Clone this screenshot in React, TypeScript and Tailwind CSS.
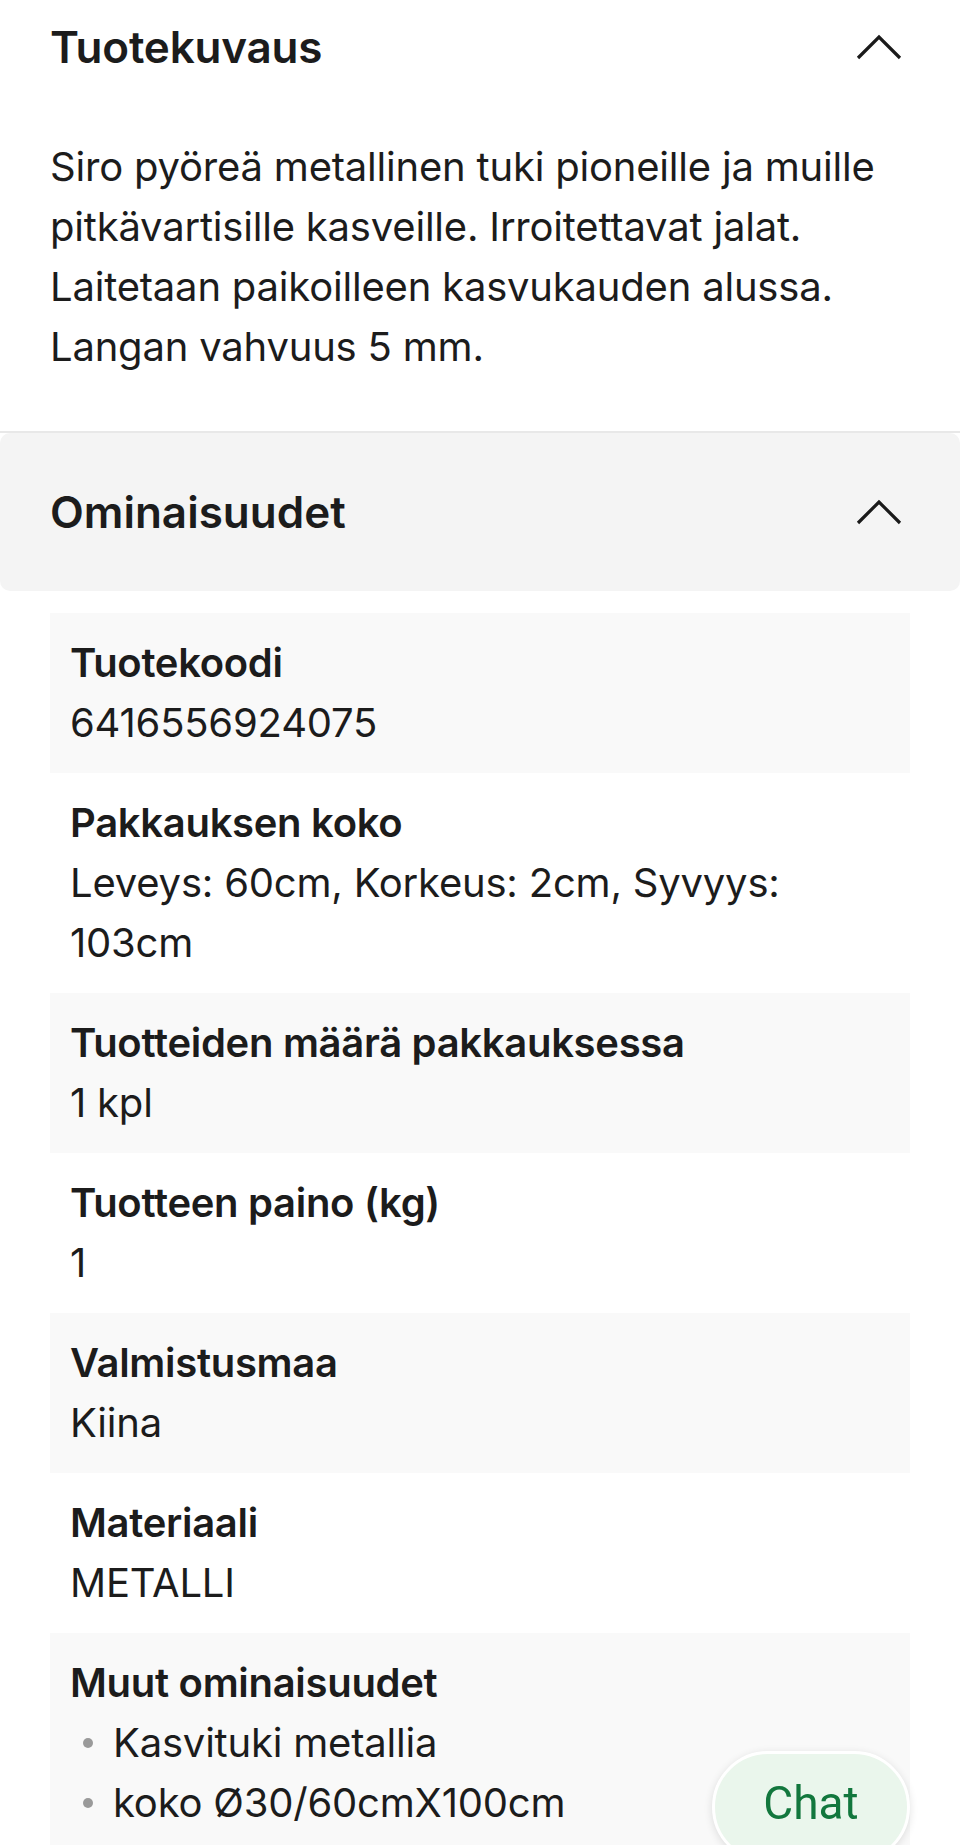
import React from "react";

const rows = [
  { label: "Tuotekoodi", value: "6416556924075" },
  { label: "Pakkauksen koko", value: "Leveys: 60cm, Korkeus: 2cm, Syvyys: 103cm" },
  { label: "Tuotteiden määrä pakkauksessa", value: "1 kpl" },
  { label: "Tuotteen paino (kg)", value: "1" },
  { label: "Valmistusmaa", value: "Kiina" },
  { label: "Materiaali", value: "METALLI" },
];

function ChevronUp() {
  return (
    <svg width="46" height="28" viewBox="0 0 46 28" fill="none" className="shrink-0">
      <polyline
        points="2,25 23,4 44,25"
        stroke="#1a1a1a"
        strokeWidth="3.2"
        strokeLinecap="butt"
        strokeLinejoin="miter"
      />
    </svg>
  );
}

export default function App() {
  return (
    <div className="relative w-[960px] bg-white font-['Inter','Liberation_Sans',sans-serif] text-[#1c1c1c]">
      {/* Tuotekuvaus */}
      <section className="px-[50px] pb-[54px]">
        <div className="flex items-center justify-between pt-[17px] pr-[8px]">
          <h2 className="text-[44px] font-semibold leading-[60px] tracking-[-0.2px]">Tuotekuvaus</h2>
          <ChevronUp />
        </div>
        <p className="mt-[60px] text-[40px] leading-[60px] tracking-[-0.2px]">
          Siro pyöreä metallinen tuki pioneille ja muille pitkävartisille kasveille. Irroitettavat jalat.
          Laitetaan paikoilleen kasvukauden alussa. Langan vahvuus 5 mm.
        </p>
      </section>

      <div className="h-[2px] bg-[#e8e8e8]" />

      {/* Ominaisuudet */}
      <section>
        <div className="flex h-[158px] items-center justify-between rounded-[10px] bg-[#f4f4f4] pl-[50px] pr-[58px]">
          <h2 className="text-[44px] font-semibold leading-[60px]">Ominaisuudet</h2>
          <ChevronUp />
        </div>

        <div className="mx-[50px] mt-[22px] flex flex-col">
          {rows.map((r, i) => (
            <div key={r.label} className={`px-[20px] py-[20px] ${i % 2 === 0 ? "bg-[#f9f9f9]" : "bg-white"}`}>
              <div className="text-[40px] font-semibold leading-[60px] tracking-[-0.3px]">{r.label}</div>
              <div className="text-[40px] leading-[60px] tracking-[-0.2px]">{r.value}</div>
            </div>
          ))}
          <div className="bg-[#f9f9f9] px-[20px] py-[20px]">
            <div className="text-[40px] font-semibold leading-[60px] tracking-[-0.3px]">Muut ominaisuudet</div>
            <ul className="flex flex-col">
              {["Kasvituki metallia", "koko Ø30/60cmX100cm"].map((t) => (
                <li key={t} className="flex items-center text-[40px] leading-[60px] tracking-[-0.2px]">
                  <span className="ml-[13px] mr-[20px] h-[10px] w-[10px] rounded-full bg-[#9a9a9a]" />
                  {t}
                </li>
              ))}
            </ul>
          </div>
        </div>
      </section>

      {/* Chat */}
      <button className="fixed bottom-[-18px] right-[50px] flex h-[112px] w-[198px] items-center justify-center rounded-full border-[3px] border-white bg-[#eaf6ec] pb-[8px] shadow-[0_2px_8px_rgba(0,0,0,0.12)]">
        <span className="font-['Roboto','Liberation_Sans',sans-serif] text-[46px] leading-none text-[#12773d]">Chat</span>
      </button>
    </div>
  );
}
